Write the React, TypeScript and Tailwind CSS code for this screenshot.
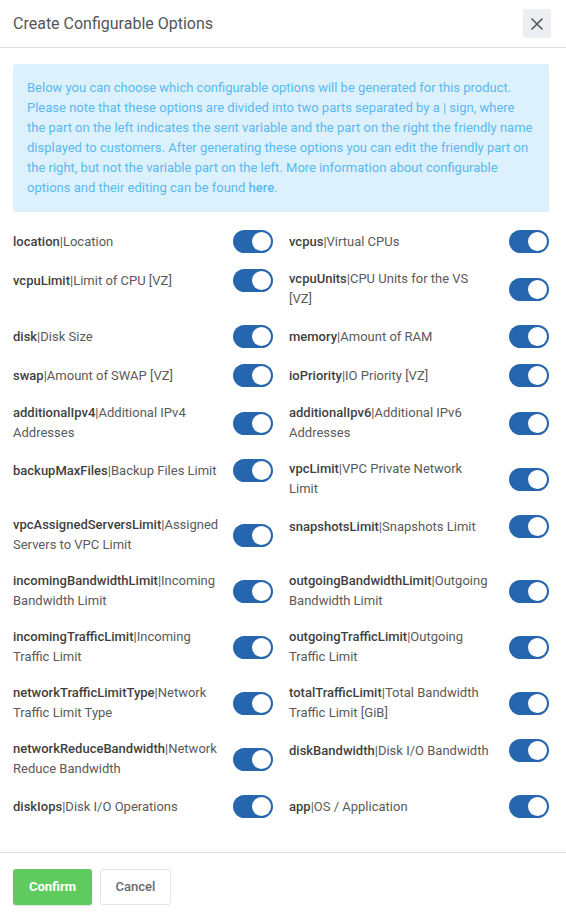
import React from "react";

type Opt = { key: string; name: string };

const options: Opt[] = [
  { key: "location", name: "Location" },
  { key: "vcpus", name: "Virtual CPUs" },
  { key: "vcpuLimit", name: "Limit of CPU [VZ]" },
  { key: "vcpuUnits", name: "CPU Units for the VS [VZ]" },
  { key: "disk", name: "Disk Size" },
  { key: "memory", name: "Amount of RAM" },
  { key: "swap", name: "Amount of SWAP [VZ]" },
  { key: "ioPriority", name: "IO Priority [VZ]" },
  { key: "additionalIpv4", name: "Additional IPv4 Addresses" },
  { key: "additionalIpv6", name: "Additional IPv6 Addresses" },
  { key: "backupMaxFiles", name: "Backup Files Limit" },
  { key: "vpcLimit", name: "VPC Private Network Limit" },
  { key: "vpcAssignedServersLimit", name: "Assigned Servers to VPC Limit" },
  { key: "snapshotsLimit", name: "Snapshots Limit" },
  { key: "incomingBandwidthLimit", name: "Incoming Bandwidth Limit" },
  { key: "outgoingBandwidthLimit", name: "Outgoing Bandwidth Limit" },
  { key: "incomingTrafficLimit", name: "Incoming Traffic Limit" },
  { key: "outgoingTrafficLimit", name: "Outgoing Traffic Limit" },
  { key: "networkTrafficLimitType", name: "Network Traffic Limit Type" },
  { key: "totalTrafficLimit", name: "Total Bandwidth Traffic Limit [GiB]" },
  { key: "networkReduceBandwidth", name: "Network Reduce Bandwidth" },
  { key: "diskBandwidth", name: "Disk I/O Bandwidth" },
  { key: "diskIops", name: "Disk I/O Operations" },
  { key: "app", name: "OS / Application" },
];

function Toggle() {
  return (
    <span className="relative flex h-[23px] w-[40px] shrink-0 items-center rounded-full bg-[#2566ae]">
      <span className="absolute right-[2px] h-[19px] w-[19px] rounded-full bg-white" />
    </span>
  );
}

function OptionRow({ opt }: { opt: Opt }) {
  return (
    <div className="flex items-center justify-between">
      <div className="w-[204.5px] text-[13px] leading-5 text-[#5a5a5a]">
        <span className="font-medium text-[#3f3f3f]">{opt.key}</span>|{opt.name}
      </div>
      <Toggle />
    </div>
  );
}

export default function App() {
  return (
    <div
      className="flex h-[914px] w-[566px] flex-col bg-white"
      style={{ fontFamily: "Roboto, 'Liberation Sans', sans-serif" }}
    >
      <div className="flex h-[48px] shrink-0 items-center justify-between border-b border-[#dedfe8] pl-[13px] pr-[15px]">
        <h1 className="text-[16px] text-[#555555]">Create Configurable Options</h1>
        <button className="flex h-[29px] w-[28px] items-center justify-center rounded-[2px] bg-[#eceef2]">
          <svg width="12" height="12" viewBox="0 0 12 12" fill="none" stroke="#555" strokeWidth="1.6" strokeLinecap="round">
            <path d="M1 1L11 11M11 1L1 11" />
          </svg>
        </button>
      </div>

      <div className="flex-1 pl-[13px] pr-[17px] pt-[16px]">
        <div className="rounded-[3px] bg-[#ddf1fd] px-[14px] py-[14px] text-[13px] leading-5 text-[#58b9f0]">
          Below you can choose which configurable options will be generated for this product. Please note that these
          options are divided into two parts separated by a | sign, where the part on the left indicates the sent
          variable and the part on the right the friendly name displayed to customers. After generating these options
          you can edit the friendly part on the right, but not the variable part on the left. More information about
          configurable options and their editing can be found <span className="font-medium">here</span>.
        </div>

        <div className="mt-[18px] grid grid-cols-2 items-start gap-x-4 gap-y-4">
          {options.map((o) => (
            <OptionRow key={o.key} opt={o} />
          ))}
        </div>
      </div>

      <div className="flex shrink-0 gap-[8px] border-t border-[#dedfe8] px-[13px] pb-[9px] pt-[16px]">
        <button className="h-[36px] w-[79px] rounded-[3px] bg-[#5fcb5f] text-[13px] font-bold text-white shadow-[0_1px_2px_rgba(0,0,0,0.15)]">
          Confirm
        </button>
        <button className="h-[36px] w-[71px] rounded-[3px] border border-[#e3e3e8] bg-white text-[13px] font-medium text-[#666a72]">
          Cancel
        </button>
      </div>
    </div>
  );
}
